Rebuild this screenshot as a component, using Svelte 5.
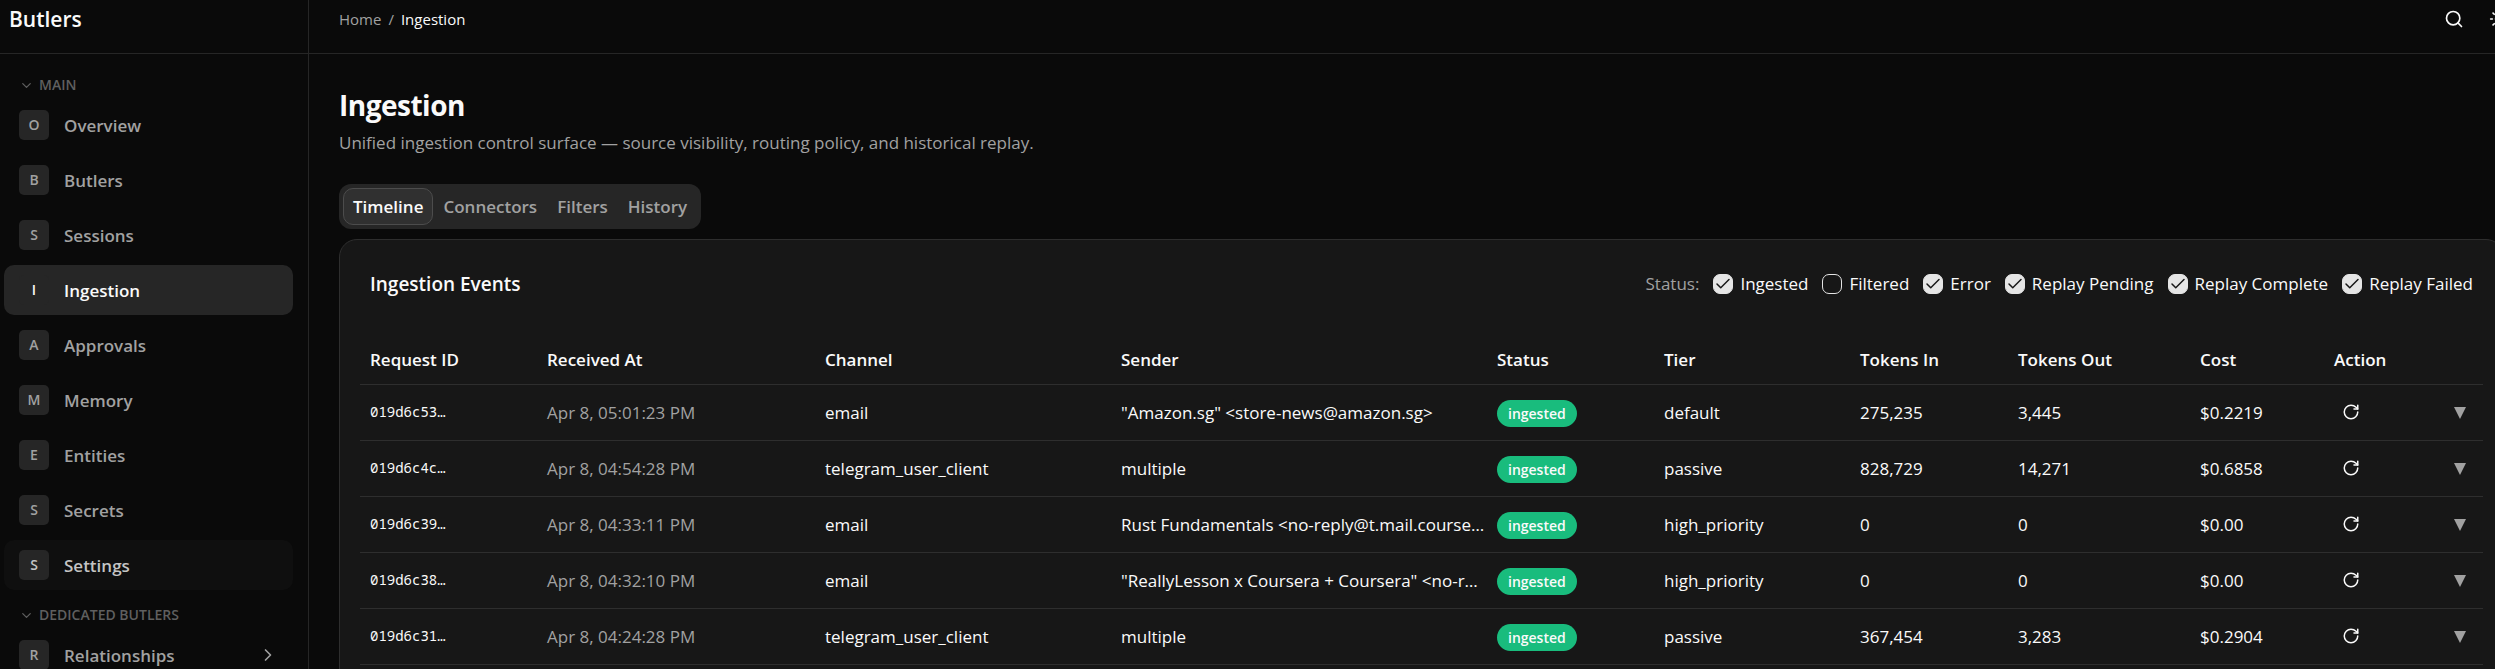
<script>
  const main = ['Overview', 'Butlers', 'Sessions', 'Ingestion', 'Approvals', 'Memory', 'Entities', 'Secrets', 'Settings'];
  const tabs = ['Timeline', 'Connectors', 'Filters', 'History'];
  const filters = [
    { label: 'Ingested', on: true },
    { label: 'Filtered', on: false },
    { label: 'Error', on: true },
    { label: 'Replay Pending', on: true },
    { label: 'Replay Complete', on: true },
    { label: 'Replay Failed', on: true }
  ];
  const columns = [
    { name: 'Request ID', width: 177 },
    { name: 'Received At', width: 278 },
    { name: 'Channel', width: 296 },
    { name: 'Sender', width: 376 },
    { name: 'Status', width: 167 },
    { name: 'Tier', width: 196 },
    { name: 'Tokens In', width: 158 },
    { name: 'Tokens Out', width: 182 },
    { name: 'Cost', width: 134 },
    { name: 'Action', width: 120 },
    { name: '', width: 39 }
  ];
  const events = [
    { id: '019d6c53…', at: 'Apr 8, 05:01:23 PM', channel: 'email', sender: '"Amazon.sg" <store-news@amazon.sg>', tier: 'default', tin: '275,235', tout: '3,445', cost: '$0.2219' },
    { id: '019d6c4c…', at: 'Apr 8, 04:54:28 PM', channel: 'telegram_user_client', sender: 'multiple', tier: 'passive', tin: '828,729', tout: '14,271', cost: '$0.6858' },
    { id: '019d6c39…', at: 'Apr 8, 04:33:11 PM', channel: 'email', sender: 'Rust Fundamentals <no-reply@t.mail.course…', tier: 'high_priority', tin: '0', tout: '0', cost: '$0.00' },
    { id: '019d6c38…', at: 'Apr 8, 04:32:10 PM', channel: 'email', sender: '"ReallyLesson x Coursera + Coursera" <no-r…', tier: 'high_priority', tin: '0', tout: '0', cost: '$0.00' },
    { id: '019d6c31…', at: 'Apr 8, 04:24:28 PM', channel: 'telegram_user_client', sender: 'multiple', tier: 'passive', tin: '367,454', tout: '3,283', cost: '$0.2904' }
  ];
</script>

{#snippet section(label)}
  <button class="section">
    <svg viewBox="0 0 24 24" class="chev"><path d="m6 9 6 6 6-6" /></svg>
    {label}
  </button>
{/snippet}

<div class="app">
  <aside>
    <div class="brand">Butlers</div>
    <nav aria-label="Primary">
      {@render section('MAIN')}
      <ul>
        {#each main as item}
          <li>
            <a href="#{item.toLowerCase()}" class:active={item === 'Ingestion'} class:hover={item === 'Settings'}>
              <span class="initial">{item[0]}</span><span class="name">{item}</span>
            </a>
          </li>
        {/each}
      </ul>
      {@render section('DEDICATED BUTLERS')}
      <ul>
        <li>
          <a href="#relationships">
            <span class="initial">R</span><span class="name">Relationships</span>
            <svg viewBox="0 0 24 24" class="more"><path d="m9 18 6-6-6-6" /></svg>
          </a>
        </li>
      </ul>
    </nav>
  </aside>

  <div class="content">
    <header>
      <div class="crumbs"><a href="#home">Home</a><span>/</span><span class="here">Ingestion</span></div>
      <div class="tools">
        <button aria-label="Search"><svg viewBox="0 0 24 24"><circle cx="11" cy="11" r="8" /><path d="m21 21-4.3-4.3" /></svg></button>
        <button aria-label="Toggle theme"><svg viewBox="0 0 24 24"><circle cx="12" cy="12" r="4" /><path d="M12 2v2M12 20v2M4.9 4.9l1.4 1.4M17.7 17.7l1.4 1.4M2 12h2M20 12h2M6.3 17.7l-1.4 1.4M19.1 4.9l-1.4 1.4" /></svg></button>
      </div>
    </header>
    <main>
      <h1>Ingestion</h1>
      <p class="lead">Unified ingestion control surface — source visibility, routing policy, and historical replay.</p>
      <div class="tabs" role="tablist">
        {#each tabs as tab, i}
          <button role="tab" aria-selected={i === 0}>{tab}</button>
        {/each}
      </div>
      <section class="card">
        <div class="cardhead">
          <h2>Ingestion Events</h2>
          <div class="filters">
            <span>Status:</span>
            {#each filters as f}
              <label><input type="checkbox" checked={f.on} />{f.label}</label>
            {/each}
          </div>
        </div>
        <table>
          <colgroup>
            {#each columns as c}<col style="width: {c.width}px" />{/each}
          </colgroup>
          <thead>
            <tr>{#each columns as c}<th>{c.name}</th>{/each}</tr>
          </thead>
          <tbody>
            {#each events as e}
              <tr>
                <td class="mono">{e.id}</td>
                <td class="muted">{e.at}</td>
                <td>{e.channel}</td>
                <td>{e.sender}</td>
                <td><span class="badge">ingested</span></td>
                <td>{e.tier}</td>
                <td>{e.tin}</td>
                <td>{e.tout}</td>
                <td>{e.cost}</td>
                <td class="icon">
                  <button class="replay" aria-label="Replay">
                    <svg viewBox="0 0 24 24"><path d="M21 12a9 9 0 1 1-9-9c2.52 0 4.93 1 6.74 2.74L21 8" /><path d="M21 3v5h-5" /></svg>
                  </button>
                </td>
                <td><button class="expand" aria-label="Expand"><svg viewBox="0 0 12 12"><path d="M0 0h12L6 12z" /></svg></button></td>
              </tr>
            {/each}
          </tbody>
        </table>
      </section>
    </main>
  </div>
</div>

<style>
  :global(body) {
    background: #0a0a0a;
    overflow: hidden;
  }
  .app {
    display: flex;
    min-height: 100vh;
    overflow: hidden;
    background: #0a0a0a;
    color: #fafafa;
    font: 400 17px/24px "Open Sans", "Noto Sans", sans-serif;
  }
  button {
    font: inherit;
    color: inherit;
    background: none;
    border: 0;
    padding: 0;
  }
  a {
    color: inherit;
    text-decoration: none;
  }
  svg {
    display: block;
    fill: none;
    stroke: currentColor;
    stroke-width: 2;
    stroke-linecap: round;
    stroke-linejoin: round;
  }
  aside {
    flex: none;
    box-sizing: border-box;
    width: 309px;
    height: 100vh;
    overflow: hidden;
    border-right: 1px solid #262626;
  }
  .brand {
    box-sizing: border-box;
    height: 54px;
    padding: 4px 9px 0;
    border-bottom: 1px solid #262626;
    font-size: 21px;
    line-height: 30px;
    font-weight: 600;
  }
  nav {
    padding: 16px 15px 0 4px;
  }
  .section {
    display: flex;
    align-items: center;
    gap: 5px;
    height: 30px;
    padding-left: 15px;
    font-size: 14px;
    font-weight: 600;
    color: #5f5f5f;
  }
  .chev {
    width: 15px;
    height: 15px;
  }
  ul {
    display: flex;
    flex-direction: column;
    gap: 5px;
    list-style: none;
    margin: 0 0 10px;
    padding: 0;
  }
  li a {
    display: flex;
    align-items: center;
    gap: 15px;
    height: 50px;
    padding: 0 15px;
    border-radius: 10px;
    font-weight: 600;
    color: #a1a1a1;
  }
  .name {
    padding-top: 2px;
  }
  .initial {
    display: grid;
    place-items: center;
    width: 30px;
    height: 30px;
    border-radius: 5px;
    background: #262626;
    font-size: 14px;
  }
  li a.active {
    background: #262626;
    color: #fafafa;
  }
  li a.hover {
    background: #0f0f0f;
    color: #c4c4c4;
  }
  .more {
    width: 20px;
    height: 20px;
    margin-left: auto;
  }
  .content {
    flex: 1;
    min-width: 0;
    margin-right: -9px;
  }
  header {
    box-sizing: border-box;
    display: flex;
    justify-content: space-between;
    height: 54px;
    padding: 7px 0 0 30px;
    border-bottom: 1px solid #262626;
  }
  .crumbs {
    display: flex;
    gap: 7px;
    font-size: 15px;
    color: #a1a1a1;
  }
  .here {
    color: #fafafa;
  }
  .tools {
    display: flex;
    align-items: center;
    height: 24px;
    gap: 25px;
    margin-right: -5px;
  }
  .tools svg {
    width: 20px;
    height: 20px;
  }
  main {
    padding: 30px 0 0 30px;
  }
  h1 {
    margin: 0;
    font-size: 28px;
    line-height: 42px;
    font-weight: 700;
    letter-spacing: -0.5px;
  }
  .lead {
    margin: 5px 0 29px;
    color: #a1a1a1;
  }
  .tabs {
    display: flex;
    width: fit-content;
    padding: 4px;
    border-radius: 12px;
    background: #262626;
  }
  .tabs button {
    height: 37px;
    padding: 0 9px;
    border: 1px solid transparent;
    border-radius: 10px;
    color: #a1a1a1;
    font-weight: 600;
  }
  .tabs button[aria-selected='true'] {
    border-color: #4c4c4c;
    background: #303030;
    color: #fafafa;
  }
  .card {
    margin-top: 10px;
    padding: 30px 20px;
    border: 1px solid #2e2e2e;
    border-radius: 18px;
    background: #171717;
  }
  .cardhead {
    display: flex;
    align-items: center;
    justify-content: space-between;
    height: 28px;
    padding: 0 10px;
    margin-bottom: 36px;
  }
  h2 {
    margin: 0;
    font-size: 19px;
    font-weight: 600;
  }
  .filters {
    display: flex;
    gap: 14px;
    color: #a1a1a1;
  }
  label {
    display: flex;
    align-items: center;
    gap: 7px;
    color: #fafafa;
  }
  input {
    appearance: none;
    box-sizing: border-box;
    width: 20px;
    height: 20px;
    margin: 0;
    border: 1px solid #e5e5e5;
    border-radius: 7px;
  }
  input:checked {
    background: #e5e5e5 url("data:image/svg+xml,%3Csvg xmlns='http://www.w3.org/2000/svg' viewBox='0 0 24 24' fill='none' stroke='%23171717' stroke-width='2' stroke-linecap='round' stroke-linejoin='round'%3E%3Cpath d='M20 6 9 17l-5-5'/%3E%3C/svg%3E") center / 18px no-repeat;
  }
  table {
    width: 100%;
    table-layout: fixed;
    border-collapse: collapse;
  }
  th,
  td {
    box-sizing: border-box;
    padding: 2px 10px 0;
    border-bottom: 1px solid #2e2e2e;
    text-align: left;
    white-space: nowrap;
  }
  th {
    height: 50px;
    font-weight: 600;
  }
  td {
    height: 56px;
  }
  td.mono {
    padding-top: 0;
    font: 14px/20px "Noto Sans Mono", "DejaVu Sans Mono", monospace;
  }
  td.icon {
    padding-top: 0;
  }
  .muted {
    color: #a1a1a1;
  }
  .badge {
    display: inline-block;
    padding: 2px 11px;
    border-radius: 14px;
    background: #19bc7d;
    font-size: 14px;
    font-weight: 600;
    line-height: 23px;
  }
  .replay {
    display: block;
    padding: 0 8px;
  }
  .replay svg {
    width: 18px;
    height: 18px;
  }
  .expand {
    display: block;
    color: #a1a1a1;
  }
  .expand svg {
    width: 12px;
    height: 12px;
    fill: currentColor;
    stroke: none;
  }
</style>
